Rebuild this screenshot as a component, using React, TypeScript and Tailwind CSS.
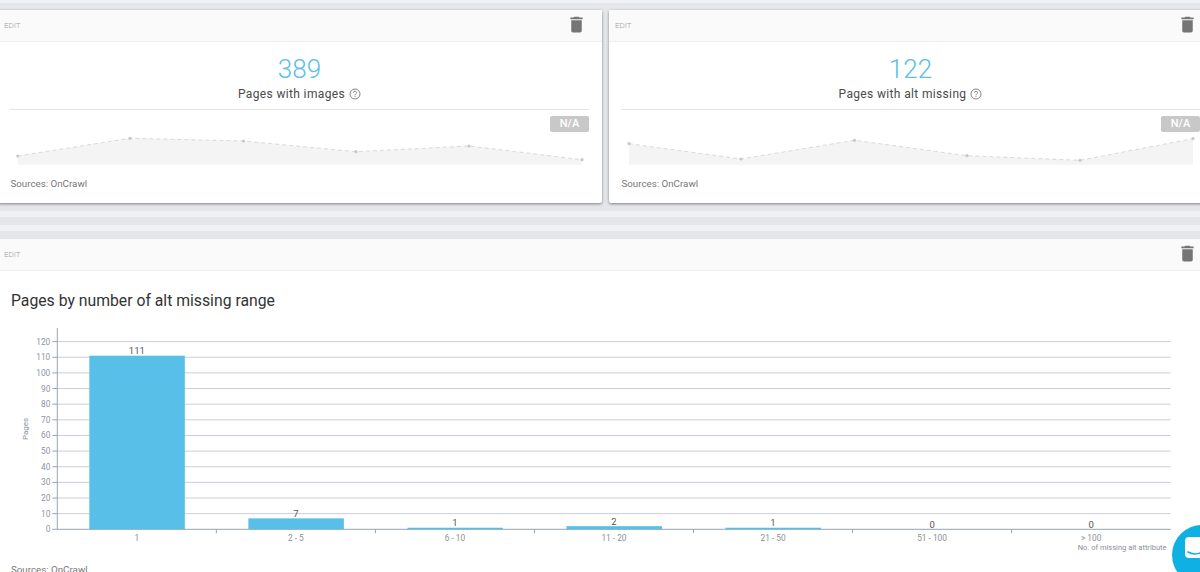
const spark1: [number, number][] = [[17.8,156],[130,138.3],[243.5,141],[356,151.7],[469,146],[582,159.7]];
const spark2: [number, number][] = [[629,143.7],[741,159],[854.5,140.3],[967,155.7],[1080,160.3],[1193,138.7]];

function Trash() {
  return (
    <svg width="21" height="21" viewBox="0 0 24 24" className="block">
      <path fill="#757575" d="M6 19c0 1.1.9 2 2 2h8c1.1 0 2-.9 2-2V7H6v12zM19 4h-3.5l-1-1h-5l-1 1H5v2h14V4z" />
    </svg>
  );
}

function Help() {
  return (
    <svg width="12" height="12" viewBox="0 0 12 12" className="block" fill="none" stroke="#666" strokeWidth="0.8">
      <circle cx="6" cy="6" r="5" />
      <path d="M4.4 4.8c0-2 3.2-2 3.2-.1 0 1.2-1.6 1.2-1.6 2.6" />
      <path d="M6 8.1v.9" />
    </svg>
  );
}

function Header() {
  return (
    <div className="flex h-[32px] items-center justify-between border-b border-[#efefef] bg-[#fafafa] pb-[2px] pl-[6px] pr-[15px]">
      <span className="mt-[2px] text-[8px] font-light text-[#a0a0a0]">EDIT</span>
      <Trash />
    </div>
  );
}

function Spark({ pts, originX }: { pts: [number, number][]; originX: number }) {
  const toX = (x: number) => x - originX;
  const toY = (y: number) => y - 116;
  const line = pts.map(([x, y]) => `${toX(x)},${toY(y)}`).join(" ");
  const area = `${toX(pts[0][0])},${toY(164.7)} ${line} ${toX(pts[pts.length - 1][0])},${toY(164.7)}`;
  return (
    <svg width="579" height="50" className="block">
      <polygon points={area} fill="#f4f4f4" />
      <polyline points={line} fill="none" stroke="#dadada" strokeWidth="1" strokeDasharray="4 3" />
      {pts.map(([x, y]) => (
        <circle key={x} cx={toX(x)} cy={toY(y)} r="1.6" fill="#c8c8c8" />
      ))}
    </svg>
  );
}

function StatCard({ value, label, pts, originX, width }: { value: string; label: string; pts: [number, number][]; originX: number; width: string }) {
  return (
    <div className={`${width} h-[193px] shrink-0 rounded-[2px] bg-white shadow-[0_1px_3px_rgba(0,0,0,0.45)]`}>
      <Header />
      <div className="pl-[12px] pr-[13px]">
        <div className="pt-[12px] text-center text-[26px] leading-[31px] font-light text-[#5bc0e8]">{value}</div>
        <div className="mt-[1px] flex h-[16px] items-center justify-center gap-[4px] text-[12px] tracking-[0.35px] text-[#4a4a4a]">
          <span>{label}</span>
          <Help />
        </div>
        <div className="mt-[7px] border-t border-[#e4e4e4]" />
        <div className="relative pt-[6px]">
          <Spark pts={pts} originX={originX} />
          <span className="absolute top-[6px] right-0 flex h-[16px] w-[39px] items-center justify-center rounded-[2px] bg-[#c8c8c8] text-[11px] font-medium text-white">N/A</span>
        </div>
        <div className="mt-[12px] pl-[0.5px] text-[9.75px] leading-[12px] text-[#777]">Sources: OnCrawl</div>
      </div>
    </div>
  );
}

const AX = 57.3;
const STEP = 159.05;
const Y0 = 529.3;
const UNIT = 1.564;
const bars = [
  { label: "1", v: 111 },
  { label: "2 - 5", v: 7 },
  { label: "6 - 10", v: 1 },
  { label: "11 - 20", v: 2 },
  { label: "21 - 50", v: 1 },
  { label: "51 - 100", v: 0 },
  { label: "> 100", v: 0 },
];
const ticks = [0, 10, 20, 30, 40, 50, 60, 70, 80, 90, 100, 110, 120];

function BarChart() {
  const oy = 320;
  const Y = (v: number) => Y0 - oy - v * UNIT;
  return (
    <svg width="1200" height="240" className="block" fontFamily="Roboto, sans-serif">
      {ticks.map((t) => (
        <g key={t}>
          {t > 0 && <line x1={AX} x2={1170.7} y1={Y(t)} y2={Y(t)} stroke="#c9cfdb" strokeWidth="1" />}
          <line x1={AX - 5} x2={AX} y1={Y(t)} y2={Y(t)} stroke="#98a3b5" strokeWidth="1" />
          <text x={AX - 7} y={Y(t) + 3} textAnchor="end" fontSize="8.3" fill="#8b95a5">{t}</text>
        </g>
      ))}
      <line x1={AX} x2={AX} y1={8} y2={Y(0)} stroke="#98a3b5" strokeWidth="1" />
      <line x1={AX} x2={1170.7} y1={Y(0)} y2={Y(0)} stroke="#98a3b5" strokeWidth="1" />
      {bars.map((b, i) => {
        const cx = AX + STEP * i + STEP / 2;
        return (
          <g key={b.label}>
            {b.v > 0 && <rect x={cx - 47.5} width={95.5} y={Y(b.v)} height={b.v * UNIT} fill="#58c0e8" />}
            <text x={cx} y={Y(b.v) - 1.5} textAnchor="middle" fontSize="9.5" fill="#555">{b.v}</text>
            <text x={cx} y={Y(0) + 12} textAnchor="middle" fontSize="8.3" fill="#8b8f98">{b.label}</text>
            {i > 0 && <line x1={AX + STEP * i} x2={AX + STEP * i} y1={Y(0)} y2={Y(0) + 4} stroke="#98a3b5" strokeWidth="1" />}
          </g>
        );
      })}
      <text x={1166.5} y={Y(0) + 21} textAnchor="end" fontSize="7.5" fill="#8b8f98">No. of missing alt attribute</text>
      <text transform={`translate(28 ${109}) rotate(-90)`} textAnchor="middle" fontSize="8" fill="#8b95a5">Pages</text>
    </svg>
  );
}

function Stripe({ h, dark }: { h: string; dark?: boolean }) {
  return <div className={`${h} ${dark ? "bg-[#e4e6ea]" : "bg-[#eff1f5]"}`} />;
}

export default function App() {
  return (
    <div className="relative h-[572px] w-[1200px] overflow-hidden bg-[#e4e6ea] font-['Roboto',sans-serif]">
      <Stripe h="h-[3px]" />
      <Stripe h="h-[7px]" dark />
      <div className="-ml-[2px] flex w-[1300px] gap-[7px]">
        <StatCard value="389" label="Pages with images" pts={spark1} originX={10} width="w-[604px]" />
        <StatCard value="122" label="Pages with alt missing" pts={spark2} originX={621} width="w-[604px]" />
      </div>
      <Stripe h="h-[8px]" dark />
      <Stripe h="h-[6px]" />
      <Stripe h="h-[8px]" dark />
      <Stripe h="h-[6px]" />
      <Stripe h="h-[8px]" dark />
      <div className="-ml-[2px] h-[400px] w-[1215px] bg-white">
        <Header />
        <div className="pl-[13px] pt-[21px] text-[15.75px] leading-[18px] font-normal text-[#333]">Pages by number of alt missing range</div>
        <div className="ml-[2px] mt-[10px]"><BarChart /></div>
        <div className="mt-[4px] pl-[13px] text-[9.75px] leading-[12px] text-[#777]">Sources: OnCrawl</div>
      </div>
      <div className="absolute left-[1172px] top-[525px] h-[60px] w-[60px] rounded-full bg-[#0fb1e2]">
        <svg width="30" height="30" viewBox="0 0 30 30" className="absolute left-[13px] top-[12px]">
          <rect x="0" y="0" width="30" height="21" rx="4" fill="#fff" />
          <path d="M3 15c4 2.5 10 2.5 14 0" fill="none" stroke="#0fb1e2" strokeWidth="1.5" strokeLinecap="round" />
        </svg>
      </div>
    </div>
  );
}
